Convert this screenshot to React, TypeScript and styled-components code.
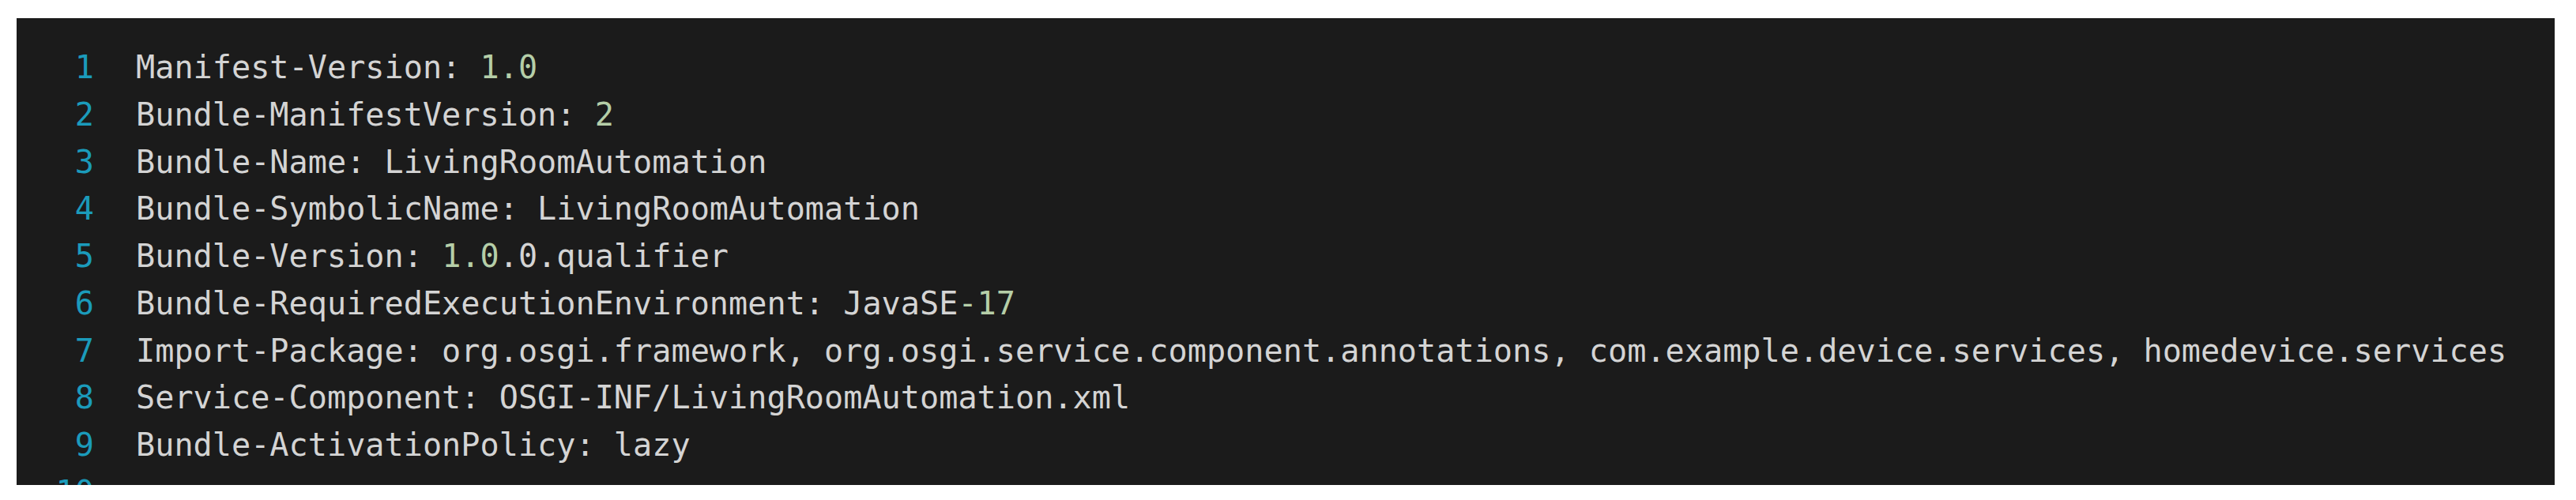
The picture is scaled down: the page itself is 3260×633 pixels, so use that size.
import React from "react";
import styled, { createGlobalStyle } from "styled-components";

const GlobalStyle = createGlobalStyle`
  html, body {
    margin: 0;
    padding: 0;
    background: #ffffff;
  }
`;

const Page = styled.div`
  padding: 23px 27px 19px 21px;
`;

const Editor = styled.pre`
  margin: 0;
  height: 591px;
  box-sizing: border-box;
  padding: 33px 0 0 49px;
  background: #1b1b1b;
  overflow: hidden;
  font-family: "DejaVu Sans Mono", "Liberation Mono", monospace;
  font-size: 40.2px;
  line-height: 59.75px;
  color: #d4d4d4;
`;

const Line = styled.div`
  display: flex;
  white-space: pre;
`;

const Gutter = styled.span`
  flex: 0 0 49px;
  text-align: right;
  color: #1b9bbb;
  margin-right: 53px;
`;

const Code = styled.span`
  color: #d4d4d4;
`;

const Num = styled.span`
  color: #b5cea8;
`;

type Seg = { t: string; n?: boolean };

const lines: Seg[][] = [
  [{ t: "Manifest-Version: " }, { t: "1.0", n: true }],
  [{ t: "Bundle-ManifestVersion: " }, { t: "2", n: true }],
  [{ t: "Bundle-Name: LivingRoomAutomation" }],
  [{ t: "Bundle-SymbolicName: LivingRoomAutomation" }],
  [{ t: "Bundle-Version: " }, { t: "1.0", n: true }, { t: ".0.qualifier" }],
  [{ t: "Bundle-RequiredExecutionEnvironment: JavaSE" }, { t: "-17", n: true }],
  [
    {
      t: "Import-Package: org.osgi.framework, org.osgi.service.component.annotations, com.example.device.services, homedevice.services",
    },
  ],
  [{ t: "Service-Component: OSGI-INF/LivingRoomAutomation.xml" }],
  [{ t: "Bundle-ActivationPolicy: lazy" }],
  [],
];

export default function App() {
  return (
    <>
      <GlobalStyle />
      <Page>
        <Editor>
          {lines.map((segs, i) => (
            <Line key={i}>
              <Gutter>{i + 1}</Gutter>
              <Code>
                {segs.map((s, j) =>
                  s.n ? <Num key={j}>{s.t}</Num> : <React.Fragment key={j}>{s.t}</React.Fragment>
                )}
              </Code>
            </Line>
          ))}
        </Editor>
      </Page>
    </>
  );
}
